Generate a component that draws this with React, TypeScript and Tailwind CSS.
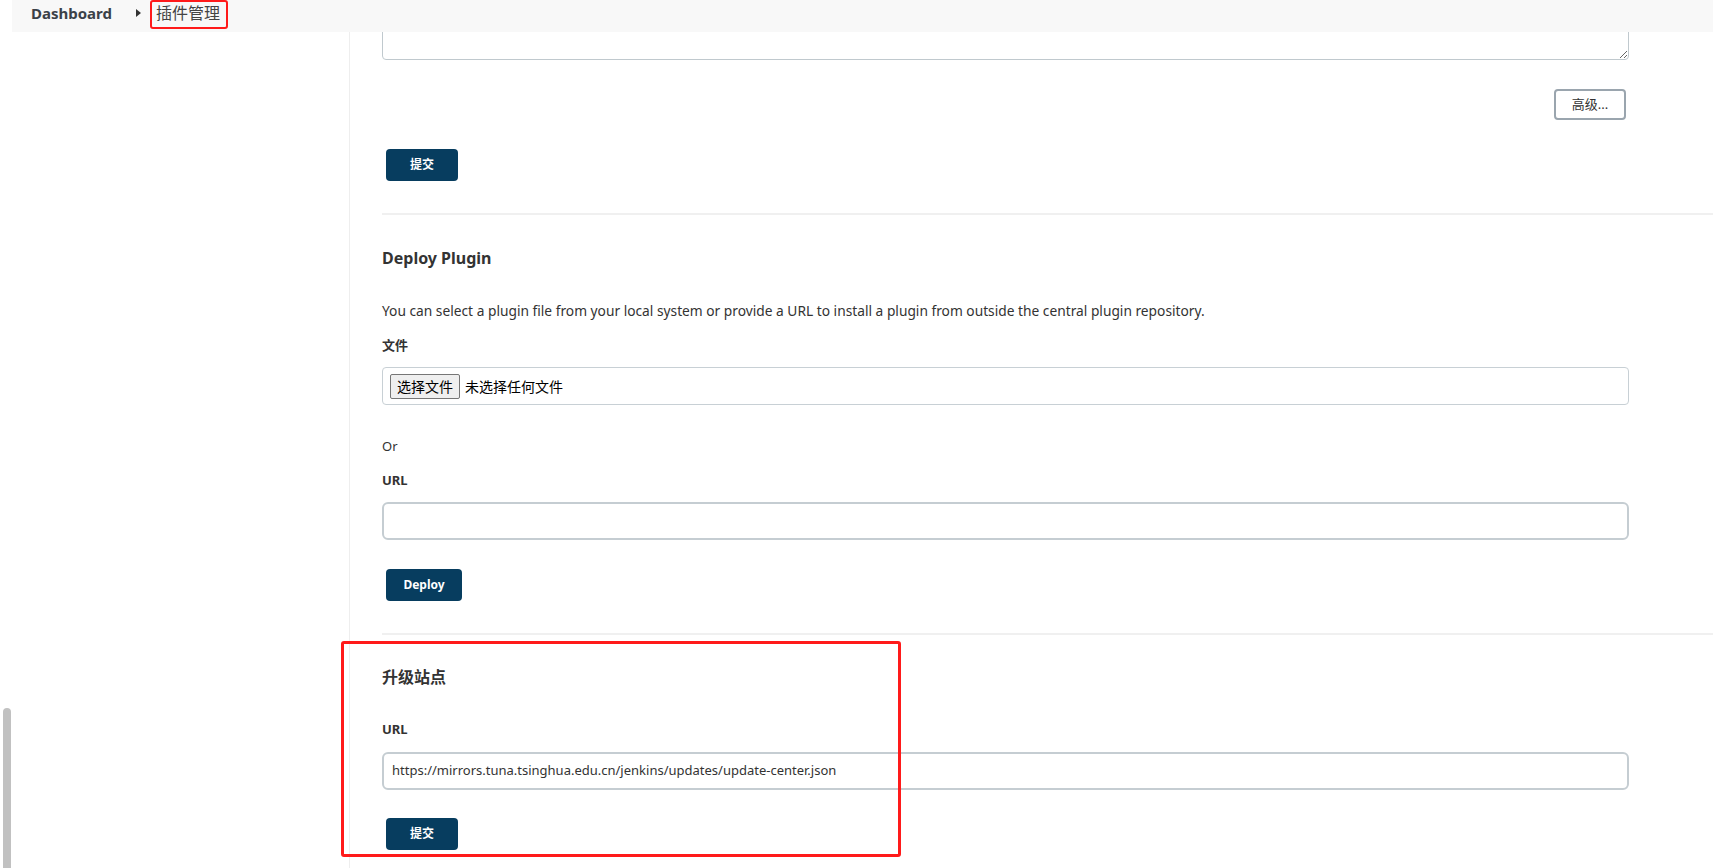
import React from "react";

const font = { fontFamily: '"Noto Sans", "Noto Sans CJK SC", sans-serif' };

function PrimaryButton({ children, w }: { children: React.ReactNode; w: string }) {
  return (
    <button
      className={`${w} h-[32px] ml-[4px] rounded-[4px] bg-[#073d5f] text-white text-[12px] font-bold flex items-center justify-center`}
    >
      {children}
    </button>
  );
}

export default function App() {
  return (
    <div
      className="relative w-[1713px] h-[868px] overflow-hidden flex bg-white text-[#333]"
      style={font}
    >
      {/* left gutter with scrollbar */}
      <div className="w-[12px] flex flex-col">
        <div className="flex-1" />
        <div className="ml-[3px] w-[8px] h-[160px] bg-[#c1c1c1] rounded-t-[4px]" />
      </div>

      <div className="flex-1 flex flex-col">
        {/* breadcrumb header */}
        <div className="h-[32px] bg-[#f8f8f8] flex items-center pl-[19px]">
          <span className="text-[15px] font-bold text-[#3b4148] leading-none -mt-[6px]">Dashboard</span>
          <svg className="ml-[24px] -mt-[6px]" width="5" height="8" viewBox="0 0 5 8">
            <path d="M0 0 L5 4 L0 8 Z" fill="#333" />
          </svg>
          <span className="ml-[15px] text-[16px] text-[#444] leading-none -mt-[6px]">插件管理</span>
        </div>

        <div className="flex-1 flex">
          <div className="w-[338px] border-r border-[#eeeeee]" />
          <div className="flex-1 pl-[32px] flex flex-col">
            {/* textarea (cut off at top) */}
            <div className="w-[1247px] h-[28px] overflow-hidden">
              <textarea
                className="block w-[1247px] h-[60px] -mt-[32px] border border-[#c0c9ce] rounded-[4px] resize-y outline-none"
                readOnly
              />
            </div>

            <div className="w-[1247px] flex justify-end pr-[3px] mt-[29px]">
              <button className="w-[72px] h-[31px] border-2 border-[#9aa5ae] rounded-[4px] text-[13px] text-[#333] flex items-center justify-center">
                高级...
              </button>
            </div>

            <div className="mt-[29px]">
              <PrimaryButton w="w-[72px]">提交</PrimaryButton>
            </div>

            <div className="mt-[32px] h-[2px] bg-[#f0f0f0]" />

            <div className="mt-[31px] text-[16px] leading-[24px] font-bold">Deploy Plugin</div>

            <div className="mt-[31px] text-[13.75px] leading-[20px]">
              You can select a plugin file from your local system or provide a URL to install a plugin from outside the central plugin repository.
            </div>

            <div className="mt-[14px] text-[13px] leading-[20px] font-bold">文件</div>

            <div className="mt-[12px] w-[1247px] h-[38px] border border-[#c8d0d5] rounded-[4px] flex items-center pl-[7px]">
              <span className="h-[25px] w-[70px] border border-[#767676] bg-[#efefef] rounded-[2px] text-[14px] flex items-center justify-center text-black">
                选择文件
              </span>
              <span className="ml-[5px] text-[14px] text-black">未选择任何文件</span>
            </div>

            <div className="mt-[31px] text-[13px] leading-[20px]">Or</div>

            <div className="mt-[14px] text-[13px] leading-[20px] font-bold">URL</div>

            <div className="mt-[12px] w-[1247px] h-[38px] border-2 border-[#c5cdd2] rounded-[6px]" />

            <div className="mt-[29px]">
              <PrimaryButton w="w-[76px]">Deploy</PrimaryButton>
            </div>

            <div className="mt-[32px] h-[2px] bg-[#f0f0f0]" />

            <div className="mt-[30px] text-[16px] leading-[24px] font-bold">升级站点</div>

            <div className="mt-[30px] text-[13px] leading-[20px] font-bold">URL</div>

            <div className="mt-[13px] w-[1247px] h-[38px] border-2 border-[#c5cdd2] rounded-[6px] flex items-center pl-[8px] text-[13px]">
              https://mirrors.tuna.tsinghua.edu.cn/jenkins/updates/update-center.json
            </div>

            <div className="mt-[28px]">
              <PrimaryButton w="w-[72px]">提交</PrimaryButton>
            </div>
          </div>
        </div>
      </div>

      {/* red annotation boxes */}
      <div className="absolute left-[150px] top-0 w-[78px] h-[29px] border-2 border-[#ff1a1a] rounded-[3px]" />
      <div className="absolute left-[341px] top-[641px] w-[560px] h-[216px] border-[3px] border-[#ff1a1a] rounded-[3px]" />
    </div>
  );
}
